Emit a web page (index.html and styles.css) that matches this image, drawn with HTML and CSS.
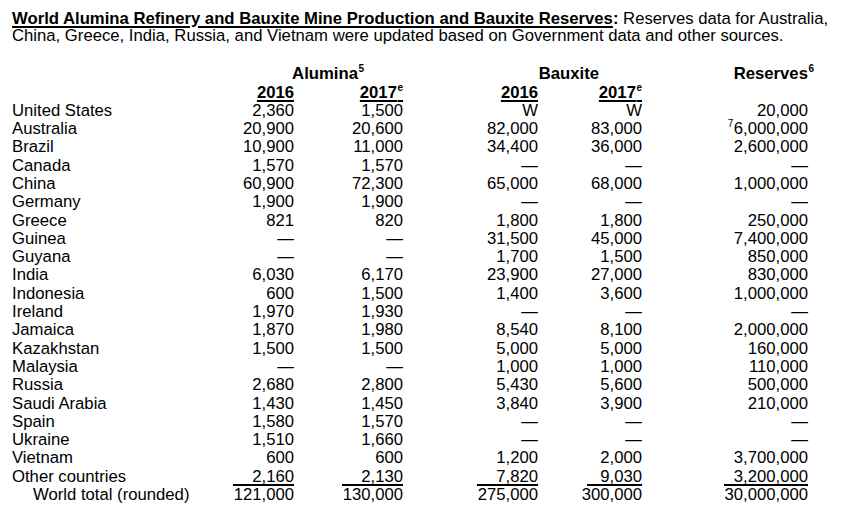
FILE: index.html
```html
<!DOCTYPE html>
<html>
<head>
<meta charset="utf-8">
<link rel="stylesheet" href="styles.css">
</head>
<body>
<div class="page">
  <p class="title"><span class="title-bold"><u>World Alumina Refinery and Bauxite Mine Production and Bauxite Reserves</u>:</span> Reserves data for Australia,<br>China, Greece, India, Russia, and Vietnam were updated based on Government data and other sources.</p>

  <div class="table">
    <div class="row head">
      <span></span>
      <span class="group group-a">Alumina<sup class="sup">5</sup></span>
      <span class="group group-b">Bauxite</span>
      <span class="num"><span class="res-head">Reserves<sup class="sup">6</sup></span></span>
    </div>
    <div class="row head">
      <span></span>
      <span class="num"><u>2016</u></span>
      <span class="num"><u>2017<sup class="sup">e</sup></u></span>
      <span class="num"><u>2016</u></span>
      <span class="num"><u>2017<sup class="sup">e</sup></u></span>
      <span></span>
    </div>

    <div class="row"><span>United States</span><span class="num">2,360</span><span class="num">1,500</span><span class="num">W</span><span class="num">W</span><span class="num">20,000</span></div>
    <div class="row"><span>Australia</span><span class="num">20,900</span><span class="num">20,600</span><span class="num">82,000</span><span class="num">83,000</span><span class="num"><sup class="sup sup-n">7</sup>6,000,000</span></div>
    <div class="row"><span>Brazil</span><span class="num">10,900</span><span class="num">11,000</span><span class="num">34,400</span><span class="num">36,000</span><span class="num">2,600,000</span></div>
    <div class="row"><span>Canada</span><span class="num">1,570</span><span class="num">1,570</span><span class="num">—</span><span class="num">—</span><span class="num">—</span></div>
    <div class="row"><span>China</span><span class="num">60,900</span><span class="num">72,300</span><span class="num">65,000</span><span class="num">68,000</span><span class="num">1,000,000</span></div>
    <div class="row"><span>Germany</span><span class="num">1,900</span><span class="num">1,900</span><span class="num">—</span><span class="num">—</span><span class="num">—</span></div>
    <div class="row"><span>Greece</span><span class="num">821</span><span class="num">820</span><span class="num">1,800</span><span class="num">1,800</span><span class="num">250,000</span></div>
    <div class="row"><span>Guinea</span><span class="num">—</span><span class="num">—</span><span class="num">31,500</span><span class="num">45,000</span><span class="num">7,400,000</span></div>
    <div class="row"><span>Guyana</span><span class="num">—</span><span class="num">—</span><span class="num">1,700</span><span class="num">1,500</span><span class="num">850,000</span></div>
    <div class="row"><span>India</span><span class="num">6,030</span><span class="num">6,170</span><span class="num">23,900</span><span class="num">27,000</span><span class="num">830,000</span></div>
    <div class="row"><span>Indonesia</span><span class="num">600</span><span class="num">1,500</span><span class="num">1,400</span><span class="num">3,600</span><span class="num">1,000,000</span></div>
    <div class="row"><span>Ireland</span><span class="num">1,970</span><span class="num">1,930</span><span class="num">—</span><span class="num">—</span><span class="num">—</span></div>
    <div class="row"><span>Jamaica</span><span class="num">1,870</span><span class="num">1,980</span><span class="num">8,540</span><span class="num">8,100</span><span class="num">2,000,000</span></div>
    <div class="row"><span>Kazakhstan</span><span class="num">1,500</span><span class="num">1,500</span><span class="num">5,000</span><span class="num">5,000</span><span class="num">160,000</span></div>
    <div class="row"><span>Malaysia</span><span class="num">—</span><span class="num">—</span><span class="num">1,000</span><span class="num">1,000</span><span class="num">110,000</span></div>
    <div class="row"><span>Russia</span><span class="num">2,680</span><span class="num">2,800</span><span class="num">5,430</span><span class="num">5,600</span><span class="num">500,000</span></div>
    <div class="row"><span>Saudi Arabia</span><span class="num">1,430</span><span class="num">1,450</span><span class="num">3,840</span><span class="num">3,900</span><span class="num">210,000</span></div>
    <div class="row"><span>Spain</span><span class="num">1,580</span><span class="num">1,570</span><span class="num">—</span><span class="num">—</span><span class="num">—</span></div>
    <div class="row"><span>Ukraine</span><span class="num">1,510</span><span class="num">1,660</span><span class="num">—</span><span class="num">—</span><span class="num">—</span></div>
    <div class="row"><span>Vietnam</span><span class="num">600</span><span class="num">600</span><span class="num">1,200</span><span class="num">2,000</span><span class="num">3,700,000</span></div>
    <div class="row"><span>Other countries</span><span class="num"><span class="rule w61">2,160</span></span><span class="num"><span class="rule w61">2,130</span></span><span class="num"><span class="rule w61">7,820</span></span><span class="num"><span class="rule w55">9,030</span></span><span class="num"><span class="rule w84">3,200,000</span></span></div>
    <div class="row"><span class="indent">World total (rounded)</span><span class="num">121,000</span><span class="num">130,000</span><span class="num">275,000</span><span class="num">300,000</span><span class="num">30,000,000</span></div>
  </div>
</div>
</body>
</html>
```

FILE: styles.css
```css
html, body {
  margin: 0;
  padding: 0;
  background: #ffffff;
}

body {
  font-family: "Liberation Sans", Arial, sans-serif;
  font-size: 16.7px;
  color: #000000;
}

.page {
  padding: 9.5px 0 0 12px;
}

.title {
  margin: 0;
  font-size: 16.7px;
  line-height: 17.7px;
  white-space: nowrap;
}

.title-bold {
  font-weight: bold;
}

.title-bold u,
.head u {
  text-decoration-thickness: 2px;
  text-underline-offset: 1.5px;
}

.table {
  margin-top: 20.3px;
}

.row {
  display: grid;
  grid-template-columns: 188px 94px 109px 135px 104px 166px;
  line-height: 18.3px;
  white-space: nowrap;
}

.head {
  font-weight: bold;
}

.num {
  text-align: right;
}

.group {
  grid-column: span 2;
  text-align: right;
}

.group-a {
  padding-right: 39px;
}

.group-b {
  padding-right: 43px;
}

.res-head {
  margin-right: -6px;
}

.sup {
  font-size: 10px;
  line-height: 0;
  vertical-align: 7px;
  margin-left: 0.5px;
}

.sup-n {
  font-weight: normal;
  margin-left: 0;
  margin-right: 0.5px;
}

.indent {
  padding-left: 21px;
}

.rule {
  display: inline-block;
  text-align: right;
  background: linear-gradient(#000, #000) no-repeat left bottom / 100% 2px;
}

.w61 { width: 61px; }
.w55 { width: 55px; }
.w84 { width: 84px; }
```
